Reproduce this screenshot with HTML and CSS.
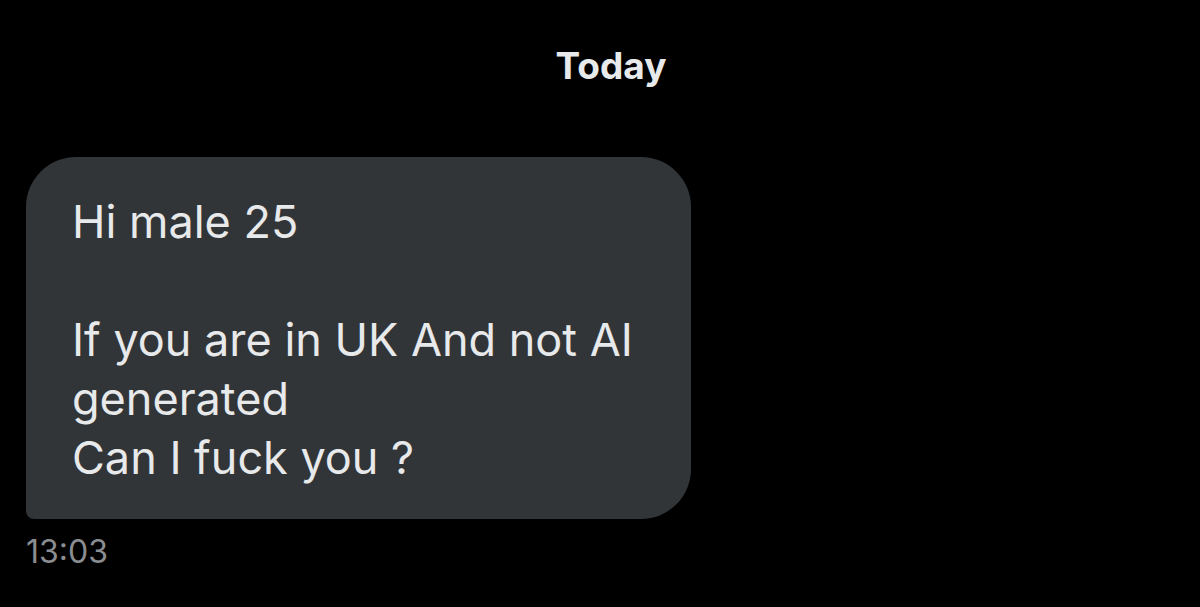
FILE: index.html
```html
<!DOCTYPE html>
<html>
<head>
<meta charset="utf-8">
<link rel="stylesheet" href="styles.css">
</head>
<body>
<div class="chat">
  <div class="day">Today</div>
  <div class="msg">
    <div class="bubble">Hi male 25<br><br>If you are in UK And not AI<br>generated<br>Can I fuck you ?</div>
    <div class="time">13:03</div>
  </div>
</div>
</body>
</html>
```
FILE: styles.css
```css
html, body {
  margin: 0;
  padding: 0;
  background: #000;
  height: 100%;
}
.chat {
  display: flex;
  flex-direction: column;
  font-family: Inter, "Noto Sans", sans-serif;
  color: #e7e9ea;
}
.day {
  text-align: center;
  font-weight: 700;
  font-size: 37px;
  line-height: 44px;
  padding-top: 44px;
  padding-left: 22px;
  color: #e7e9ea;
}
.msg {
  display: flex;
  flex-direction: column;
  align-items: flex-start;
  padding-left: 26px;
  margin-top: 69px;
}
.bubble {
  width: 665px;
  box-sizing: border-box;
  background: #323538;
  border-radius: 50px 50px 50px 8px;
  padding: 35px 40px 32px 46px;
  font-size: 45px;
  line-height: 59px;
}
.time {
  margin-top: 13px;
  font-size: 32px;
  line-height: 40px;
  color: #8a8d91;
}
```
